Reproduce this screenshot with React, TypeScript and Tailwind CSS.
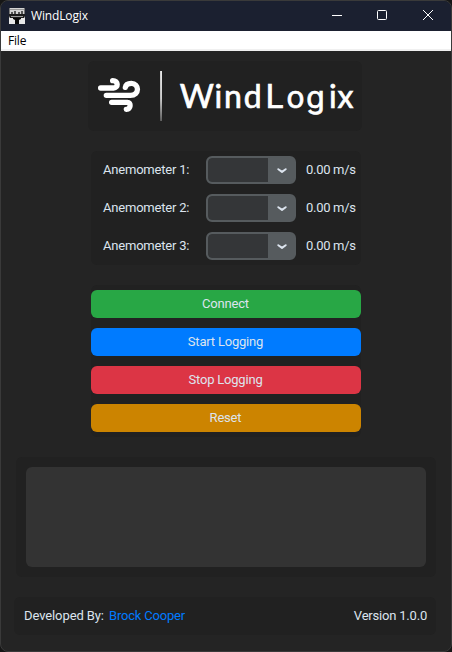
import React from "react";

const channels = [
  { label: "Anemometer 1:", speed: "0.00 m/s" },
  { label: "Anemometer 2:", speed: "0.00 m/s" },
  { label: "Anemometer 3:", speed: "0.00 m/s" },
];

const actions = [
  { label: "Connect", color: "bg-[#28a745]" },
  { label: "Start Logging", color: "bg-[#007bff]" },
  { label: "Stop Logging", color: "bg-[#dc3545]" },
  { label: "Reset", color: "bg-[#cc8400]" },
];

function AppIcon() {
  return (
    <svg className="ml-2 size-4" viewBox="0 0 16 16">
      <rect width="16" height="16" fill="#d4d4d4" />
      <path d="M0 0h1v6H0zM15 0h1v6h-1z" fill="#777" />
      <path d="M1 1h14v1H1z" fill="#999" />
      <path d="M2 4h2v2H2zM5 3h2v3H5zM9 4h2v2H9zM12 3h2v3h-2z" fill="#555" />
      <path d="M0 6h16v2l-1 2H1L0 8z" fill="#1c1c1c" />
      <path d="M2 8h12v1H2z" fill="#999" />
      <path d="M0 10h16v6H0z" fill="#e8e8e8" />
      <path d="M4 10h8v1l-2 1v4H6v-4l-2-1z" fill="#0a0a0a" />
    </svg>
  );
}

function TitleBar() {
  return (
    <header className="flex h-[30px] shrink-0 items-center bg-[#1b2030] text-white">
      <AppIcon />
      <span className="ml-1.5 font-['Open_Sans','Noto_Sans',sans-serif] text-[12px] leading-4 tracking-[-0.15px]">
        WindLogix
      </span>
      <div className="ml-auto flex h-full items-center">
        <svg className="h-[30px] w-[46px]" viewBox="0 0 46 30" fill="none" stroke="white">
          <path d="M19 14.5h10" />
        </svg>
        <svg className="h-[30px] w-[46px]" viewBox="0 0 46 30" fill="none" stroke="white">
          <rect x="18.5" y="9.5" width="9" height="9" rx="1" />
        </svg>
        <svg className="h-[30px] w-[46px]" viewBox="0 0 46 30" fill="none" stroke="white">
          <path d="m18 9 10 10m0-10L18 19" />
        </svg>
      </div>
    </header>
  );
}

function Logo() {
  return (
    <div className="h-[70px] w-[274px] rounded-md bg-[#212121]">
      <svg className="h-[70px] w-[274px]" viewBox="88 61 274 70">
        <defs>
          <linearGradient id="divider" x1="0" y1="0" x2="0" y2="1">
            <stop offset="0" stopColor="#fff" />
            <stop offset="0.55" stopColor="#e0e0e0" />
            <stop offset="1" stopColor="#666" />
          </linearGradient>
        </defs>
        <g
          transform="translate(80 55) scale(.33333)"
          fill="none"
          stroke="#fff"
          strokeWidth="16"
          strokeLinecap="round"
          strokeLinejoin="round"
        >
          <path d="M62 99H101C115 99 116 77 98 77" />
          <path d="M79 121H151C180 121 178 85 154 85C143 85 137 91 136 97" />
          <path d="M95 142H142C154 142 153 162 139 163" />
        </g>
        <rect x="160.2" y="71" width="1.7" height="50" fill="url(#divider)" />
        <text
          y="108.2"
          fill="#fff"
          stroke="#fff"
          strokeWidth="0.7"
          className="font-['Lato',sans-serif] text-[33px] tracking-normal"
        >
          <tspan x="179.8">W</tspan>
          <tspan x="214.4 224 243.8" className="text-[32px]">ind</tspan>
          <tspan x="265.4" className="font-['Inter',sans-serif] text-[33px]">L</tspan>
          <tspan x="286.4 306.2" className="font-['Inter',sans-serif] text-[30px]">og</tspan>
          <tspan x="329 337.4" className="text-[32px]">ix</tspan>
        </text>
      </svg>
    </div>
  );
}

function ComboBox() {
  return (
    <div className="flex h-7 w-[90px] overflow-hidden rounded-md border-2 border-[#565b5e] bg-[#565b5e]">
      <div className="w-[60px] rounded-l-[4px] bg-[#343638]" />
      <div className="flex flex-1 items-center justify-center pl-0.5">
        <svg className="size-3" viewBox="0 0 12 12" fill="none" stroke="#dce4ee" strokeWidth="2" strokeLinecap="round" strokeLinejoin="round">
          <path d="M2.3 5.2 6 7.9 9.7 5.2" />
        </svg>
      </div>
    </div>
  );
}

export default function App() {
  return (
    <div className="h-[652px] w-[452px] bg-[#161616]">
      <div className="flex h-full w-full flex-col overflow-hidden rounded-lg border border-[#3a3a3a] bg-[#242424] font-['Roboto',sans-serif] text-[13px] leading-7 tracking-[-0.2px] text-[#dce4ee]">
        <TitleBar />
        <nav className="flex h-5 shrink-0 items-center border-b-2 border-[#f0f0f0] bg-white pl-[7px] font-['Open_Sans','Noto_Sans',sans-serif] text-[12px] leading-4 text-black">
          <span className="relative top-px">File</span>
        </nav>
        <main className="flex flex-col items-center pt-2.5">
          <div className="mr-0.5">
            <Logo />
          </div>
          <section className="mt-5 flex h-[114px] w-[270px] flex-col gap-2.5 rounded-md bg-[#212121] pt-[5px]">
            {channels.map((channel) => (
              <div key={channel.label} className="flex h-7 items-center pl-3">
                <span className="w-[103px]">{channel.label}</span>
                <ComboBox />
                <span className="ml-2.5 whitespace-nowrap tracking-[-0.3px]">{channel.speed}</span>
              </div>
            ))}
          </section>
          <section className="mt-5 flex h-[152px] w-[270px] flex-col gap-2.5 rounded-md bg-[#212121] pt-[5px]">
            {actions.map((action) => (
              <button key={action.label} className={`h-7 rounded-md pr-px text-center leading-7 ${action.color}`}>
                {action.label}
              </button>
            ))}
          </section>
          <section className="mt-5 h-[120px] w-[420px] rounded-md bg-[#212121] p-2.5">
            <div className="h-full rounded-md bg-[#333333]" />
          </section>
          <footer className="mt-5 mr-0.5 flex h-[38px] w-[422px] items-center rounded-md bg-[#212121] pr-[9px] pl-2.5">
            <span className="w-20 tracking-[-0.1px]">Developed By:</span>
            <a className="ml-[5px] text-[#007bff]">Brock Cooper</a>
            <span className="ml-auto">Version 1.0.0</span>
          </footer>
        </main>
      </div>
    </div>
  );
}
